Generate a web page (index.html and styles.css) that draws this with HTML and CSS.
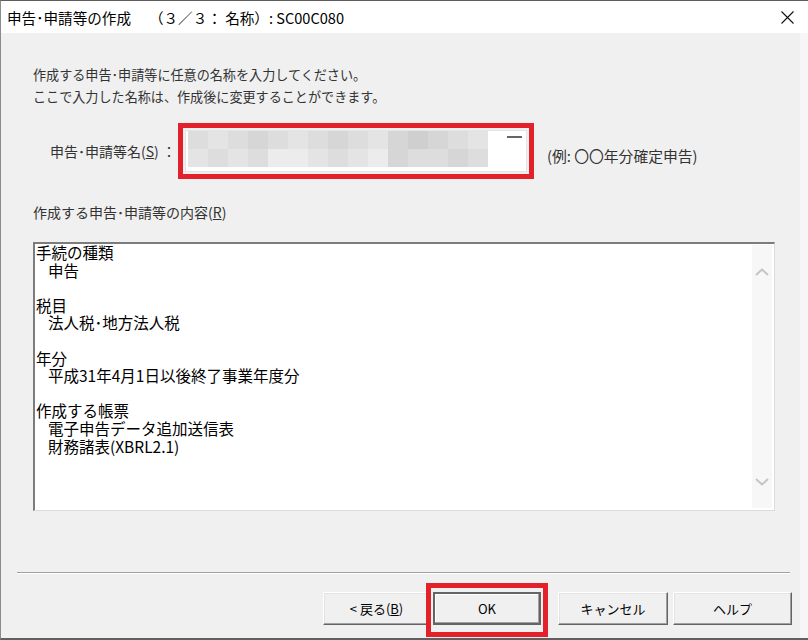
FILE: index.html
```html
<!DOCTYPE html>
<html lang="ja">
<head>
<meta charset="utf-8">
<title>申告･申請等の作成</title>
<link rel="stylesheet" href="styles.css">
</head>
<body>
<div class="window">
  <div class="titlebar">
    <span class="title">申告･申請等の作成　 （３／３： 名称）: SC00C080</span>
    <svg class="close" width="13" height="13" viewBox="0 0 13 13"><path d="M0.5 0.5 L12.5 12.5 M12.5 0.5 L0.5 12.5" stroke="#111" stroke-width="1.1" fill="none"/></svg>
  </div>
  <div class="client">
    <p class="intro">作成する申告･申請等に任意の名称を入力してください。<br>ここで入力した名称は、作成後に変更することができます。</p>
    <div class="name-row">
      <span class="name-label">申告･申請等名(<u>S</u>) ：</span>
      <div class="name-box">
        <div class="name-input">
          <div class="blur">
            <span class="s2"></span><span class="s1"></span><span class="s2"></span><span class="s3"></span><span class="s2"></span><span class="s1"></span><span class="s2"></span><span class="s3"></span><span class="s2"></span><span class="s1"></span><span class="s3"></span><span class="s4"></span><span class="s3"></span><span class="s2"></span><span class="s1"></span>
            <span class="s1"></span><span class="s2"></span><span class="s1"></span><span class="s2"></span><span class="s0"></span><span class="s0"></span><span class="s1"></span><span class="s2"></span><span class="s1"></span><span class="s0"></span><span class="s3"></span><span class="s2"></span><span class="s2"></span><span class="s3"></span><span class="s2"></span>
          </div>
          <span class="dash"></span>
        </div>
      </div>
      <span class="example">(例: 〇〇年分確定申告)</span>
    </div>
    <div class="section-label">作成する申告･申請等の内容(<u>R</u>)</div>
    <div class="content-box">
      <div class="content-text">
        <div class="line">手続の種類</div>
        <div class="line ind">申告</div>
        <div class="line"></div>
        <div class="line">税目</div>
        <div class="line ind">法人税･地方法人税</div>
        <div class="line"></div>
        <div class="line">年分</div>
        <div class="line ind">平成31年4月1日以後終了事業年度分</div>
        <div class="line"></div>
        <div class="line">作成する帳票</div>
        <div class="line ind">電子申告データ追加送信表</div>
        <div class="line ind">財務諸表(XBRL2.1)</div>
      </div>
      <div class="scrollbar">
        <svg width="14" height="8" viewBox="0 0 14 8"><path d="M1 7 L7 1.5 L13 7" stroke="#c4c4c4" stroke-width="2" fill="none"/></svg>
        <svg width="14" height="8" viewBox="0 0 14 8"><path d="M1 1 L7 6.5 L13 1" stroke="#c4c4c4" stroke-width="2" fill="none"/></svg>
      </div>
    </div>
    <div class="separator"></div>
    <div class="buttons">
      <button class="btn btn-back">&lt; 戻る(<u>B</u>)</button>
      <div class="ok-wrap">
        <button class="btn btn-ok">OK</button>
        <span class="ok-mark"></span>
      </div>
      <button class="btn btn-cancel">キャンセル</button>
      <button class="btn btn-help">ヘルプ</button>
    </div>
  </div>
</div>
</body>
</html>
```

FILE: styles.css
```css
html, body {
  margin: 0;
  padding: 0;
}
body {
  font-family: "Noto Sans CJK JP", "Noto Sans", sans-serif;
  background: #f0f0f0;
  color: #000;
}
.window {
  width: 808px;
  height: 640px;
  box-sizing: border-box;
  border-top: 1px solid #5c5c5c;
  border-left: 1px solid #8a8a8a;
  border-bottom: 2px solid #606060;
  display: flex;
  flex-direction: column;
}
.titlebar {
  height: 32px;
  flex: none;
  background: #fff;
  display: flex;
  align-items: center;
  justify-content: space-between;
  padding: 0 14px 0 6px;
  font-size: 14.6px;
}
.title {
  white-space: pre;
}
.close {
  display: block;
}
.client {
  flex: 1;
  background: #f0f0f0;
  border-right: 8px solid #f6f6f6;
  padding: 31px 0 0 32px;
  font-size: 14px;
  color: #333;
}
.intro {
  margin: 0;
  font-size: 13.1px;
  line-height: 22px;
}
.name-row {
  display: flex;
  align-items: center;
  margin-top: 15px;
}
.name-label {
  margin-left: 17px;
  width: 128px;
  white-space: nowrap;
}
.name-box {
  width: 356px;
  height: 56px;
  box-sizing: border-box;
  border: 5px solid #e3212b;
  padding: 2px;
  background: #f0f0f0;
}
.name-input {
  height: 100%;
  box-sizing: border-box;
  background: #fff;
  border: 1px solid #e4e4e4;
  display: flex;
  align-items: flex-start;
}
.blur {
  margin-left: 2px;
  width: 300px;
  height: 36px;
  display: grid;
  grid-template-columns: repeat(15, 20px);
  grid-template-rows: 18px 18px;
}
.s0 { background: #ececec; }
.s1 { background: #e4e4e4; }
.s2 { background: #dddddd; }
.s3 { background: #d6d6d6; }
.s4 { background: #cfcfcf; }
.dash {
  margin-left: 19px;
  margin-top: 5px;
  width: 15px;
  height: 2px;
  background: #666;
}
.example {
  margin-left: 13px;
  margin-top: 8px;
  font-size: 14.8px;
  white-space: nowrap;
}
.section-label {
  margin-top: 22px;
  line-height: 22px;
}
.content-box {
  margin-top: 19px;
  width: 742px;
  height: 269px;
  box-sizing: border-box;
  border-top: 2px solid #7c7c7c;
  border-left: 2px solid #7c7c7c;
  border-right: 1px solid #dcdcdc;
  border-bottom: 1px solid #dcdcdc;
  background: #fff;
  display: flex;
}
.content-text {
  flex: 1;
  font-size: 15.5px;
  padding-left: 1px;
  color: #000;
}
.line {
  height: 17.6px;
  line-height: 17.6px;
  white-space: nowrap;
}
.ind {
  padding-left: 12px;
}
.scrollbar {
  width: 20px;
  background: #f7f7f7;
  margin: 1px 2px 2px 0;
  padding: 23px 0 22px;
  box-sizing: border-box;
  display: flex;
  flex-direction: column;
  justify-content: space-between;
  align-items: center;
}
.separator {
  margin-top: 61px;
  margin-left: -16px;
  width: 773px;
  border-top: 1px solid #a0a0a0;
  border-bottom: 1px solid #fff;
}
.buttons {
  display: flex;
  margin-top: 18px;
  padding-left: 290px;
}
.btn {
  height: 33px;
  box-sizing: border-box;
  background: #f0f0f0;
  font-family: "Noto Sans CJK JP", "Noto Sans", sans-serif;
  font-size: 13px;
  color: #000;
  padding: 0;
  border: 1px solid;
  border-color: #ffffff #646464 #646464 #ffffff;
  box-shadow: inset -1px -1px #a0a0a0, inset 1px 1px #e3e3e3;
}
.btn-back { width: 107px; }
.ok-wrap {
  position: relative;
  margin-left: 3px;
}
.btn-ok {
  width: 108px;
  border: 2px solid #646464;
  box-shadow: inset -1px -1px #a0a0a0, inset 1px 1px #ffffff;
}
.ok-mark {
  position: absolute;
  left: -7px;
  right: -7px;
  top: -9px;
  bottom: -12px;
  border: 5px solid #e3212b;
  pointer-events: none;
}
.btn-cancel {
  width: 110px;
  margin-left: 17px;
}
.btn-help {
  width: 119px;
  margin-left: 5px;
}
```
